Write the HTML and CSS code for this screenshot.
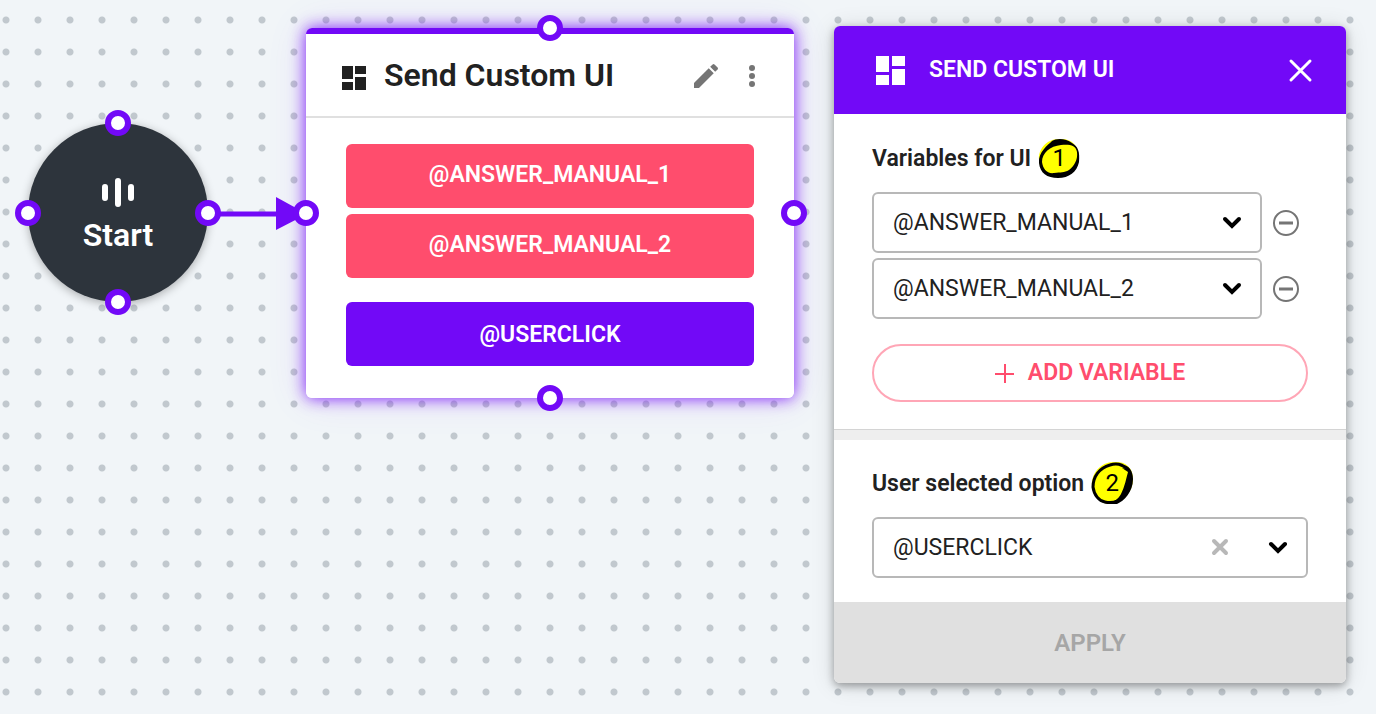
FILE: index.html
```
<!DOCTYPE html>
<html lang="en">
<head>
<meta charset="utf-8">
<title>Send Custom UI</title>
<link rel="stylesheet" href="styles.css">
</head>
<body>
<main class="canvas">
  <svg class="edge" width="100" height="36" viewBox="0 0 100 36" aria-hidden="true">
    <path d="M0 19H76" stroke="#7209f7" stroke-width="5"/>
    <path d="M76 2L107 19L76 35Z" fill="#7209f7"/>
  </svg>

  <section class="start-node">
    <svg class="start-icon" width="32" height="30" viewBox="0 0 32 30" fill="none" stroke="#fff" stroke-width="6" stroke-linecap="round" aria-hidden="true">
      <path d="M3 10V21M16 4V27M29 10V21"/>
    </svg>
    <span class="start-label">Start</span>
    <i class="port port-top"></i>
    <i class="port port-right"></i>
    <i class="port port-bottom"></i>
    <i class="port port-left"></i>
  </section>

  <article class="card">
    <header class="card-header">
      <svg width="24" height="28" viewBox="0 -4 24 28" fill="#212121" aria-hidden="true">
        <path d="M0 0H11V13H0ZM13 0H24V8H13ZM13 11H24V24H13ZM0 16H11V24H0Z"/>
      </svg>
      <h2 class="card-title">Send Custom UI</h2>
      <button class="icon-button" type="button" aria-label="Edit">
        <svg width="32" height="32" viewBox="0 0 24 24" fill="#757575"><path d="M3 17.25V21h3.75L17.81 9.94l-3.75-3.75L3 17.25zM20.71 7.04c.39-.39.39-1.02 0-1.41l-2.34-2.34a1 1 0 0 0-1.41 0l-1.83 1.83 3.75 3.75 1.83-1.83z"/></svg>
      </button>
      <button class="icon-button" type="button" aria-label="More">
        <svg width="32" height="32" viewBox="0 0 32 32" fill="#757575"><circle cx="16" cy="8" r="3"/><circle cx="16" cy="16" r="3"/><circle cx="16" cy="24" r="3"/></svg>
      </button>
    </header>
    <div class="card-body">
      <div class="chip">@ANSWER_MANUAL_1</div>
      <div class="chip">@ANSWER_MANUAL_2</div>
      <div class="chip chip-output">@USERCLICK</div>
    </div>
    <i class="port port-top"></i>
    <i class="port port-right"></i>
    <i class="port port-bottom"></i>
    <i class="port port-left"></i>
  </article>

  <form class="panel">
    <header class="panel-header">
      <svg width="30" height="30" viewBox="0 0 30 30" fill="#fff" aria-hidden="true">
        <path d="M1 1H14V17H1ZM17 1H30V11H17ZM17 14H30V30H17ZM1 20H14V30H1Z"/>
      </svg>
      <h2 class="panel-title">SEND CUSTOM UI</h2>
      <button class="icon-button" type="button" aria-label="Close">
        <svg width="32" height="32" viewBox="0 0 32 32" fill="none" stroke="#fff" stroke-width="3" stroke-linecap="round"><path d="M7 7L26 26M26 7L7 26"/></svg>
      </button>
    </header>

    <section class="group">
      <div class="group-head">
        <label class="group-label" for="variable-1">Variables for UI</label>
        <span class="badge">
          <svg width="42" height="40" viewBox="0 0 42 40" aria-hidden="true">
            <path d="M1 22C0 12 8 1 21 1C33 0 41 7 41 20C41 31 32 39 20 39C9 39 2 33 1 22Z" fill="#ff0"/>
            <path fill-rule="evenodd" d="M1 25C0 14 10 7 14 3C18 0 28 0 34 5C40 9 42 13 41 24C39 34 31 40 20 40C9 40 2 35 1 25ZM4 24C5 31 9 36 16 35C23 34 26 35 31 32C36 28 40 22 39 14C38 7 31 6 23 7C12 8 4 15 4 24Z" fill="#000"/>
          </svg>
          <span class="badge-text">1</span>
        </span>
      </div>
      <div class="rows">
        <div class="row">
          <div class="field">
            <select class="select" id="variable-1"><option>@ANSWER_MANUAL_1</option></select>
            <svg class="chevron" width="20" height="14" viewBox="0 0 20 14" aria-hidden="true"><path d="M3 3L10 10L17 3"/></svg>
          </div>
          <button class="icon-button" type="button" aria-label="Remove variable 1">
            <svg width="28" height="28" viewBox="0 0 28 28" fill="none" stroke="#757575" stroke-width="2"><circle cx="14" cy="14" r="12"/><path d="M7 14H21" stroke-width="3"/></svg>
          </button>
        </div>
        <div class="row">
          <div class="field">
            <select class="select" id="variable-2" aria-label="Variable 2"><option>@ANSWER_MANUAL_2</option></select>
            <svg class="chevron" width="20" height="14" viewBox="0 0 20 14" aria-hidden="true"><path d="M3 3L10 10L17 3"/></svg>
          </div>
          <button class="icon-button" type="button" aria-label="Remove variable 2">
            <svg width="28" height="28" viewBox="0 0 28 28" fill="none" stroke="#757575" stroke-width="2"><circle cx="14" cy="14" r="12"/><path d="M7 14H21" stroke-width="3"/></svg>
          </button>
        </div>
      </div>
      <button class="add-button" type="button">
        <svg width="20" height="20" viewBox="0 0 20 20" fill="none" stroke="#ff4d6d" stroke-width="2" aria-hidden="true"><path d="M0 11H19M10 1V20"/></svg>
        ADD VARIABLE
      </button>
    </section>

    <section class="group group-option">
      <div class="group-head">
        <label class="group-label" for="option">User selected option</label>
        <span class="badge">
          <svg width="42" height="44" viewBox="0 0 42 44" aria-hidden="true">
            <path d="M1 25C0 13 9 1 23 1C34 0 42 6 42 18C42 31 31 43 20 43C9 43 2 36 1 25Z" fill="#ff0"/>
            <path fill="none" stroke="#000" stroke-width="3" stroke-linejoin="round" d="M36 8C31 3 25 2 19 4C8 7 2 16 2 26C3 34 8 40 14 41C19 42 22 42 26 40"/>
            <path d="M31 4C38 4 42 10 42 18C42 31 33 40 26 43H13C21 42 27 39 30 33C34 25 35 18 37 11L31 7L36 8Z" fill="#000"/>
          </svg>
          <span class="badge-text">2</span>
        </span>
      </div>
      <div class="field">
        <select class="select" id="option"><option>@USERCLICK</option></select>
        <button class="clear" type="button" aria-label="Clear">
          <svg width="18" height="18" viewBox="0 0 18 18" fill="none" stroke="#b8b8b8" stroke-width="4" stroke-linecap="round"><path d="M3 3L15 15M15 3L3 15"/></svg>
        </button>
        <svg class="chevron" width="20" height="14" viewBox="0 0 20 14" aria-hidden="true"><path d="M3 3L10 10L17 3"/></svg>
      </div>
    </section>

    <button class="apply" type="submit" disabled>APPLY</button>
  </form>
</main>
</body>
</html>
```
FILE: styles.css
```
:root {
  --purple: #7209f7;
  --pink: #ff4d6d;
  --ink: #212121;
}

* {
  box-sizing: border-box;
}

body {
  margin: 0;
  font-family: Roboto, "Liberation Sans", sans-serif;
  color: var(--ink);
}

h2 {
  margin: 0;
  font-weight: 600;
}

button,
select {
  font: inherit;
}

svg {
  display: block;
}

.canvas {
  position: relative;
  display: flex;
  justify-content: flex-end;
  align-items: flex-start;
  min-height: 100vh;
  padding: 26px 30px;
  background-color: #f1f5f8;
  background-image: radial-gradient(circle, #c1c8ce 3px, transparent 4px);
  background-size: 32px 32px;
  background-position: -10px 4px;
  overflow: hidden;
}

.icon-button {
  display: grid;
  place-items: center;
  padding: 0;
  border: 0;
  background: none;
}

/* Diagram nodes */
.start-node {
  position: absolute;
  left: 28px;
  top: 123px;
  display: flex;
  flex-direction: column;
  align-items: center;
  justify-content: center;
  gap: 8px;
  width: 180px;
  height: 179px;
  padding-top: 6px;
  border-radius: 50%;
  background: #2d343c;
  box-shadow: 0 2px 10px rgba(0, 0, 0, 0.3);
}

.start-label {
  font-size: 32px;
  line-height: 40px;
  font-weight: 600;
  color: #fff;
}

.edge {
  position: absolute;
  left: 200px;
  top: 195px;
  overflow: visible;
  z-index: 2;
}

.port {
  position: absolute;
  z-index: 3;
  width: 26px;
  height: 26px;
  border: 6px solid var(--purple);
  border-radius: 50%;
  background: #fff;
  transform: translate(-50%, -50%);
}

.port-top { left: 50%; top: 0; }
.port-right { left: 100%; top: 50%; }
.port-bottom { left: 50%; top: 100%; }
.port-left { left: 0; top: 50%; }

.card {
  position: absolute;
  left: 306px;
  top: 28px;
  width: 488px;
  border-radius: 6px;
  background: linear-gradient(var(--purple) 6px, #fff 6px);
  box-shadow: 0 0 16px rgba(114, 9, 247, 0.9), 0 0 40px rgba(114, 9, 247, 0.12);
}

.card-header {
  display: flex;
  align-items: center;
  gap: 14px;
  height: 90px;
  padding: 8px 26px 0 36px;
  border-bottom: 2px solid #e0e0e0;
}

.card-title {
  flex: 1;
  margin-left: 4px;
  padding-bottom: 2px;
  font-size: 32px;
  line-height: 40px;
}

.card-body {
  display: flex;
  flex-direction: column;
  gap: 6px;
  padding: 26px 40px 32px;
}

.chip {
  padding: 15px 0 17px;
  border-radius: 6px;
  background: var(--pink);
  color: #fff;
  font-size: 23px;
  line-height: 32px;
  font-weight: 600;
  text-align: center;
}

.chip-output {
  margin-top: 18px;
  padding: 17px 0 15px;
  background: var(--purple);
}

/* Settings panel */
.panel {
  width: 512px;
  border-radius: 6px;
  background: #fff;
  box-shadow: 0 3px 8px rgba(0, 0, 0, 0.35), 0 2px 24px rgba(0, 0, 0, 0.12);
  overflow: hidden;
}

.panel-header {
  display: flex;
  align-items: center;
  gap: 24px;
  height: 88px;
  padding: 0 30px 0 41px;
  background: var(--purple);
  color: #fff;
}

.panel-title {
  flex: 1;
  font-size: 23px;
  line-height: 32px;
}

.group {
  padding: 24px 38px 28px;
}

.group-option {
  padding: 21px 38px 24px;
  border-top: 10px solid #eee;
  box-shadow: 0 -1px 0 #d4d4d4;
}

.group-head {
  display: flex;
  align-items: center;
  gap: 7px;
  margin-bottom: 14px;
}

.group-option .group-head {
  margin-bottom: 12px;
}

.group-label {
  padding-top: 1px;
  font-size: 23px;
  line-height: 32px;
  font-weight: 500;
}

.badge {
  display: grid;
  place-items: center;
}

.badge > * {
  grid-area: 1 / 1;
}

.badge-text {
  font-size: 24px;
  line-height: 32px;
  color: #000;
}

.rows {
  display: grid;
  gap: 5px;
}

.row {
  display: flex;
  align-items: center;
  gap: 10px;
  padding-right: 8px;
}

.field {
  position: relative;
  flex: 1;
}

.select {
  display: block;
  width: 100%;
  height: 61px;
  padding: 0 19px;
  border: 2px solid #b8b8b8;
  border-radius: 6px;
  background: #fff;
  color: var(--ink);
  font-size: 23px;
  appearance: none;
}

.chevron {
  position: absolute;
  right: 20px;
  top: 24px;
  fill: none;
  stroke: #000;
  stroke-width: 4;
  stroke-linecap: round;
  pointer-events: none;
}

.clear {
  position: absolute;
  right: 79px;
  top: 21px;
  padding: 0;
  border: 0;
  background: none;
}

.add-button {
  display: flex;
  align-items: center;
  justify-content: center;
  gap: 13px;
  width: 100%;
  height: 58px;
  margin-top: 25px;
  padding-bottom: 2px;
  border: 2px solid #ffa6b6;
  border-radius: 29px;
  background: #fff;
  color: var(--pink);
  font-size: 23px;
  font-weight: 600;
}

.group-label {
  font-weight: 600;
}

.apply {
  display: block;
  width: 100%;
  height: 81px;
  border: 0;
  background: #e0e0e0;
  color: #a6a6a6;
  font-size: 24px;
  font-weight: 600;
}
```
